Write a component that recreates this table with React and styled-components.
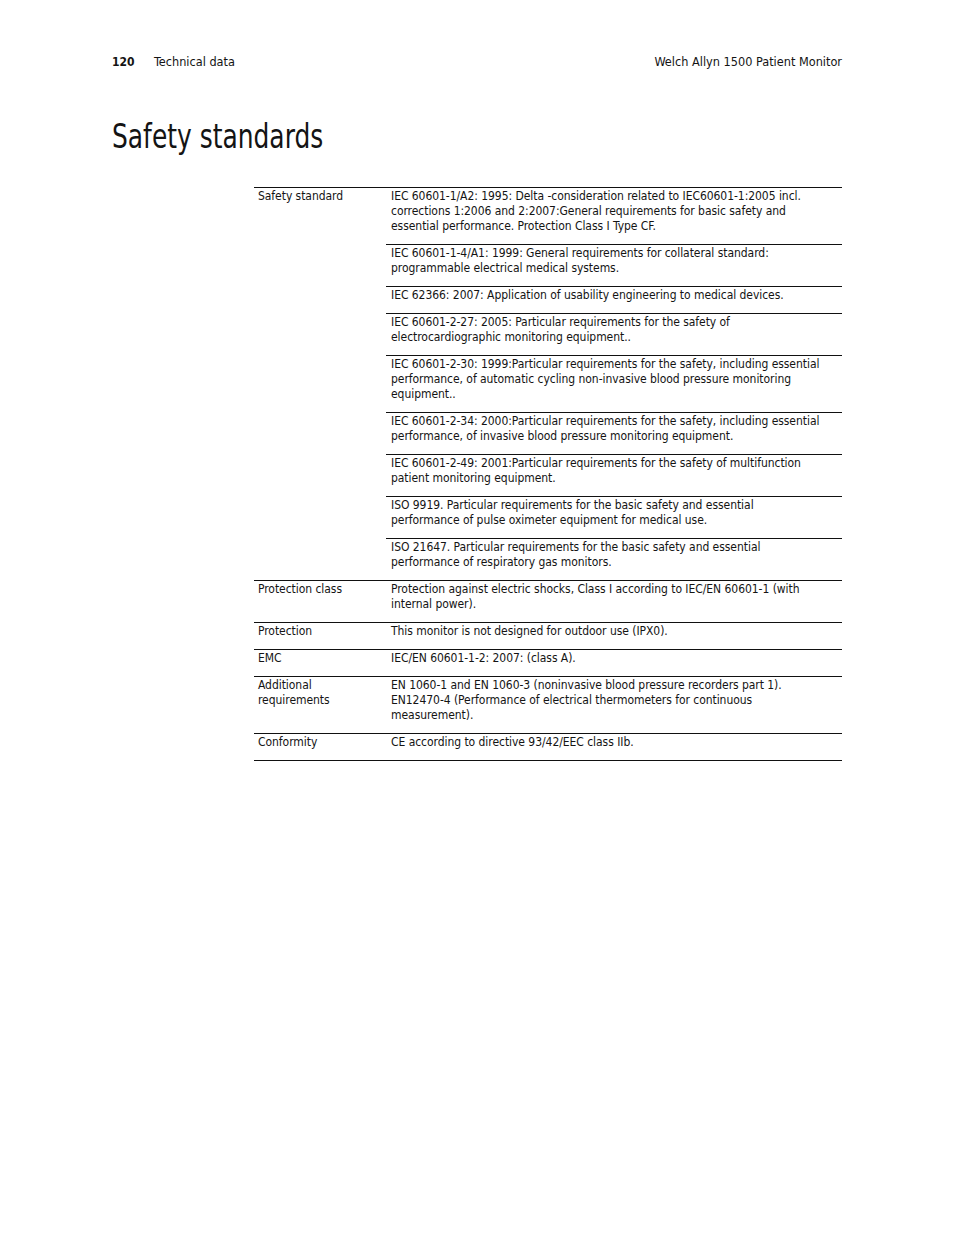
import React from 'react';
import styled, { createGlobalStyle } from 'styled-components';

const GlobalStyle = createGlobalStyle`
  html, body {
    margin: 0;
    padding: 0;
    background: #fff;
  }
  body {
    font-family: "Liberation Sans Narrow", "DejaVu Sans Condensed", "Liberation Sans", sans-serif;
    color: #141414;
  }
`;

const Page = styled.div`
  width: 954px;
  min-height: 1235px;
  box-sizing: border-box;
  padding: 54px 112px 0 112px;
`;

const Header = styled.div`
  display: flex;
  align-items: baseline;
  font-size: 12.6px;
  line-height: 16px;
`;

const PageNum = styled.span`
  font-weight: bold;
  font-size: 12px;
  width: 42px;
`;

const Section = styled.span`
  flex: 1;
`;

const Title = styled.h1`
  margin: 47px 0 0 0;
  font-size: 33px;
  font-weight: normal;
  line-height: 40px;
  transform: scaleX(0.84);
  transform-origin: left center;
`;

const Table = styled.div`
  margin: 30px 0 0 142px;
  border-bottom: 1px solid #111;
  font-size: 12px;
  letter-spacing: -0.05px;
  line-height: 15px;
`;

const Row = styled.div`
  display: grid;
  grid-template-columns: 132px 1fr;
  border-top: 1px solid #111;
`;

const Label = styled.div`
  padding: 1px 4px 10px 4px;
`;

const Values = styled.div`
  display: flex;
  flex-direction: column;
`;

const Item = styled.div`
  padding: 1px 5px 10px 5px;
  white-space: nowrap;

  & + & {
    border-top: 1px solid #111;
  }
`;

const rows = [
  {
    label: ['Safety standard'],
    items: [
      [
        'IEC 60601-1/A2: 1995: Delta -consideration related to IEC60601-1:2005 incl.',
        'corrections 1:2006 and 2:2007:General requirements for basic safety and',
        'essential performance. Protection Class I Type CF.',
      ],
      [
        'IEC 60601-1-4/A1: 1999: General requirements for collateral standard:',
        'programmable electrical medical systems.',
      ],
      ['IEC 62366: 2007: Application of usability engineering to medical devices.'],
      [
        'IEC 60601-2-27: 2005: Particular requirements for the safety of',
        'electrocardiographic monitoring equipment..',
      ],
      [
        'IEC 60601-2-30: 1999:Particular requirements for the safety, including essential',
        'performance, of automatic cycling non-invasive blood pressure monitoring',
        'equipment..',
      ],
      [
        'IEC 60601-2-34: 2000:Particular requirements for the safety, including essential',
        'performance, of invasive blood pressure monitoring equipment.',
      ],
      [
        'IEC 60601-2-49: 2001:Particular requirements for the safety of multifunction',
        'patient monitoring equipment.',
      ],
      [
        'ISO 9919. Particular requirements for the basic safety and essential',
        'performance of pulse oximeter equipment for medical use.',
      ],
      [
        'ISO 21647. Particular requirements for the basic safety and essential',
        'performance of respiratory gas monitors.',
      ],
    ],
  },
  {
    label: ['Protection class'],
    items: [[
      'Protection against electric shocks, Class I according to IEC/EN 60601-1 (with',
      'internal power).',
    ]],
  },
  {
    label: ['Protection'],
    items: [['This monitor is not designed for outdoor use (IPX0).']],
  },
  {
    label: ['EMC'],
    items: [['IEC/EN 60601-1-2: 2007: (class A).']],
  },
  {
    label: ['Additional', 'requirements'],
    items: [[
      'EN 1060-1 and EN 1060-3 (noninvasive blood pressure recorders part 1).',
      'EN12470-4 (Performance of electrical thermometers for continuous',
      'measurement).',
    ]],
  },
  {
    label: ['Conformity'],
    items: [['CE according to directive 93/42/EEC class IIb.']],
  },
];

const Lines = ({ lines }) => lines.map((line, i) => (
  <React.Fragment key={i}>
    {i > 0 && <br />}
    {line}
  </React.Fragment>
));

export default function App() {
  return (
    <Page>
      <GlobalStyle />
      <Header>
        <PageNum>120</PageNum>
        <Section>Technical data</Section>
        <span>Welch Allyn 1500 Patient Monitor</span>
      </Header>
      <Title>Safety standards</Title>
      <Table>
        {rows.map(row => (
          <Row key={row.label[0]}>
            <Label><Lines lines={row.label} /></Label>
            <Values>
              {row.items.map((item, i) => (
                <Item key={i}><Lines lines={item} /></Item>
              ))}
            </Values>
          </Row>
        ))}
      </Table>
    </Page>
  );
}
